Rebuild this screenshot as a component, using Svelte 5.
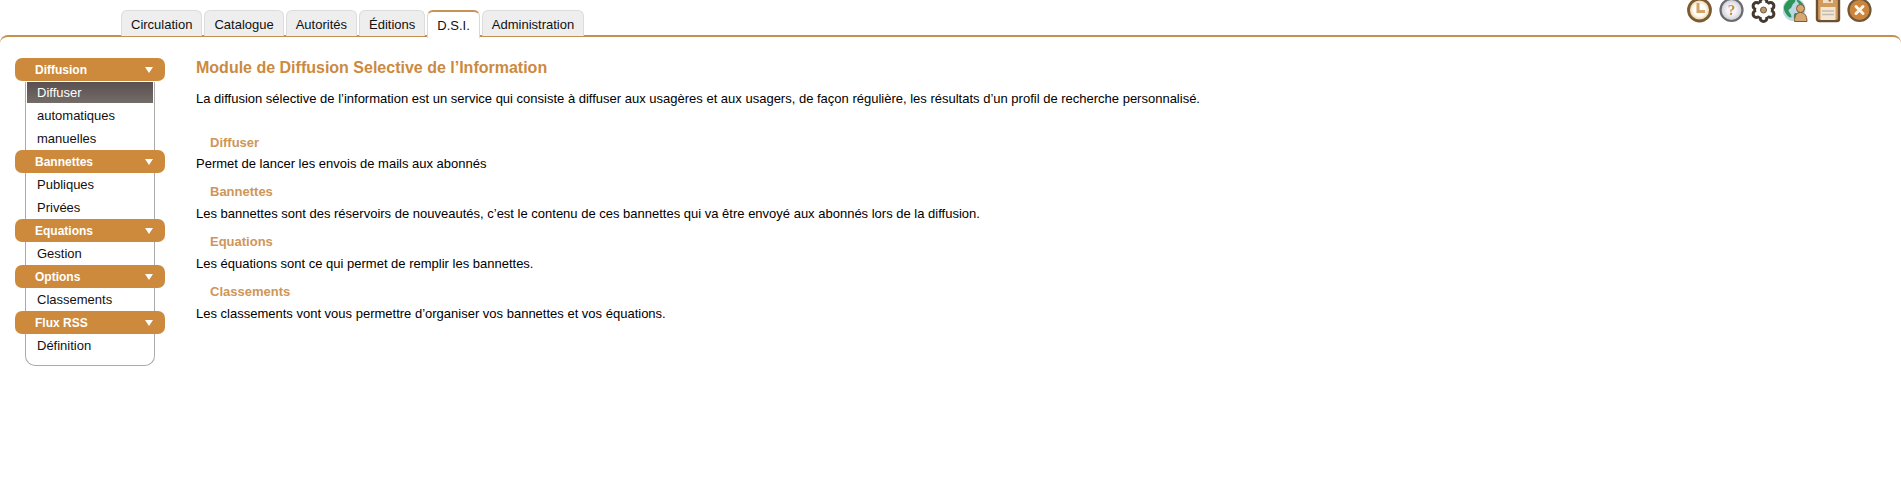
<script>
  const tabs = ['Circulation', 'Catalogue', 'Autorités', 'Éditions', 'D.S.I.', 'Administration'];
  const menu = [
    { title: 'Diffusion', items: ['Diffuser', 'automatiques', 'manuelles'] },
    { title: 'Bannettes', items: ['Publiques', 'Privées'] },
    { title: 'Equations', items: ['Gestion'] },
    { title: 'Options', items: ['Classements'] },
    { title: 'Flux RSS', items: ['Définition'] }
  ];
  const sections = [
    ['Diffuser', 'Permet de lancer les envois de mails aux abonnés'],
    ['Bannettes', 'Les bannettes sont des réservoirs de nouveautés, c’est le contenu de ces bannettes qui va être envoyé aux abonnés lors de la diffusion.'],
    ['Equations', 'Les équations sont ce qui permet de remplir les bannettes.'],
    ['Classements', 'Les classements vont vous permettre d’organiser vos bannettes et vos équations.']
  ];
</script>

<div class="page">
  <header class="top">
    <nav class="tabs">
      {#each tabs as t}
        <div class="tab" class:active={t === 'D.S.I.'}>{t}</div>
      {/each}
    </nav>
    <div class="icons">
      <svg width="26" height="26" viewBox="0 0 26 26">
        <defs>
          <radialGradient id="cl"><stop offset="0.55" stop-color="#fffdf8" /><stop offset="1" stop-color="#e7c48e" /></radialGradient>
          <radialGradient id="he"><stop offset="0.4" stop-color="#f5f5f8" /><stop offset="1" stop-color="#c9cbd4" /></radialGradient>
        </defs>
        <circle cx="12.500" cy="13" r="11" fill="url(#cl)" stroke="#7a5c30" stroke-width="2.800" />
        <path d="M11 6v8.500h7" fill="none" stroke="#d2a465" stroke-width="3" />
      </svg>
      <svg width="26" height="26" viewBox="0 0 26 26">
        <circle cx="12.500" cy="13" r="11" fill="url(#he)" stroke="#6b6b6e" stroke-width="2.200" />
        <text x="12.500" y="18" text-anchor="middle" class="q">?</text>
      </svg>
      <svg width="26" height="26" viewBox="0 0 26 26">
        <g fill="#fff" stroke="#453a30" stroke-width="3">
          <circle cx="12.500" cy="5" r="3.400" /><circle cx="12.500" cy="21" r="3.400" />
          <circle cx="5.500" cy="9" r="3.400" /><circle cx="19.500" cy="9" r="3.400" />
          <circle cx="5.500" cy="17" r="3.400" /><circle cx="19.500" cy="17" r="3.400" />
        </g>
        <circle cx="12.500" cy="13" r="7.500" fill="#fff" />
        <circle cx="12.500" cy="13" r="3" fill="#c09a60" stroke="#6a5a48" />
      </svg>
      <svg width="26" height="26" viewBox="0 0 26 26">
        <circle cx="11" cy="12.500" r="11.500" fill="#bcd6e6" />
        <path d="M1 9.500C2.500 5.500 5.500 2.500 8.500 2c4-.5 5 2 2.500 4S9.500 10.500 6.500 12 8.500 16.500 8.500 19.500c0 2-3 1-5-2S.5 12.500 1 9.500z" fill="#2b9458" />
        <path d="M13.500 2.500c4 1 7 4 8 8-3 0-4-1-5-3s-3-3-3-5zM11.500 16.500c2-1 4 0 4 2s-1 4-3 4-2-4-1-6z" fill="#2b9458" />
        <circle cx="17.500" cy="11.500" r="4" fill="#d6a673" stroke="#7c5c34" stroke-width="1" />
        <path d="M11.500 24.500c0-6 2-9 6-9s6.500 3 6.500 9z" fill="#d6a673" stroke="#7c5c34" stroke-width="1" />
      </svg>
      <svg width="26" height="26" viewBox="0 0 26 26">
        <rect x="2" y="-2" width="22" height="26" rx="2" fill="#d29a5c" stroke="#6e5030" stroke-width="2.400" />
        <path d="M8 0h10v6H8z" fill="#f0dfc6" />
        <path d="M13.500 0h2.500v4.500h-2.500z" fill="#a9763c" />
        <path d="M5.500 10h15v13h-15z" fill="#f3e6d4" />
        <path d="M7 14h12M7 17.500h12" stroke="#c4bcae" stroke-width="1.400" />
      </svg>
      <svg width="26" height="26" viewBox="0 0 26 26">
        <circle cx="12.500" cy="13" r="11" fill="#cd853c" stroke="#70573a" stroke-width="2.200" />
        <path d="M9 9.500l7 7M16 9.500l-7 7" stroke="#fdf6ea" stroke-width="3" stroke-linecap="round" />
      </svg>
    </div>
  </header>

  <div class="body">
    <aside class="side">
      {#each menu as m, i}
        <div class="head">
          <span>{m.title}</span>
          <i class="caret"></i>
        </div>
        <ul class:last={i === menu.length - 1}>
          {#each m.items as it}
            <li class:sel={it === 'Diffuser'}>{it}</li>
          {/each}
        </ul>
      {/each}
    </aside>
    <main class="content">
      <h1>Module de Diffusion Selective de l’Information</h1>
      <p class="lead">La diffusion sélective de l’information est un service qui consiste à diffuser aux usagères et aux usagers, de façon régulière, les résultats d’un profil de recherche personnalisé.</p>
      {#each sections as [h, d], i}
        <h3 class:first={i === 0}>{h}</h3>
        <p>{d}</p>
      {/each}
    </main>
  </div>
</div>

<style>
  :global(body) {
    margin: 0;
    background: #fff;
  }
  .page {
    font-family: "Liberation Sans", Arial, sans-serif;
    font-size: 13px;
    color: #000;
    height: 477px;
    overflow: hidden;
  }
  .top {
    display: flex;
    justify-content: space-between;
    align-items: flex-start;
    height: 35px;
  }
  .tabs {
    display: flex;
    gap: 2px;
    margin: 10px 0 0 121px;
    position: relative;
    z-index: 1;
  }
  .tab {
    height: 25px;
    line-height: 28px;
    padding: 0 9px;
    background: #eeeeee;
    border: 1px solid #dcdcdc;
    border-bottom: none;
    border-radius: 6px 6px 0 0;
    color: #111;
  }
  .tab.active {
    height: 26px;
    background: #fff;
    border: 1px solid #e6d6c2;
    border-top: 2px solid #c99257;
    border-bottom: none;
    line-height: 27px;
  }
  .icons {
    display: flex;
    gap: 6px;
    margin: -3px 28px 0 0;
  }
  .icons svg {
    filter: blur(0.35px);
  }
  .body {
    display: flex;
    align-items: flex-start;
    gap: 31px;
    border-top: 2px solid #c4904f;
    border-radius: 8px 8px 0 0;
    padding: 21px 0 0 15px;
  }
  .side {
    width: 150px;
    flex: none;
  }
  .head {
    height: 23px;
    display: flex;
    align-items: center;
    justify-content: space-between;
    padding: 1px 12px 0 20px;
    box-sizing: border-box;
    background: #cd8a3c;
    border-radius: 7px;
    color: #fff;
    font-size: 12px;
    font-weight: bold;
    position: relative;
  }
  .caret {
    width: 0;
    height: 0;
    border-left: 4px solid transparent;
    border-right: 4px solid transparent;
    border-top: 6.500px solid #fff;
  }
  ul {
    list-style: none;
    margin: 0 10px;
    padding: 0;
    border-left: 1px solid #aaa;
    border-right: 1px solid #aaa;
  }
  ul.last {
    padding-bottom: 8px;
    border-bottom: 1px solid #aaa;
    border-radius: 0 0 10px 10px;
  }
  li {
    height: 23px;
    line-height: 23px;
    padding-left: 11px;
    color: #111;
  }
  li.sel {
    height: 21px;
    line-height: 21px;
    margin: 1px;
    padding-left: 10px;
    color: #fff;
    background: linear-gradient(#5a5050, #746c68);
  }
  .content {
    flex: 1;
  }
  h1 {
    font-size: 16px;
    line-height: 20px;
    margin: 0;
    color: #cc8a3e;
  }
  p {
    margin: 7px 0 0;
    line-height: 16px;
  }
  p.lead {
    margin-top: 13px;
  }
  h3 {
    font-size: 13px;
    line-height: 15px;
    margin: 12px 0 0 14px;
    color: #cf9657;
  }
  h3.first {
    margin-top: 28px;
  }
  h3.first + p {
    margin-top: 6px;
  }
  .q {
    font-family: "Liberation Serif", serif;
    font-size: 15px;
    font-weight: bold;
    fill: #c8893f;
  }
</style>
